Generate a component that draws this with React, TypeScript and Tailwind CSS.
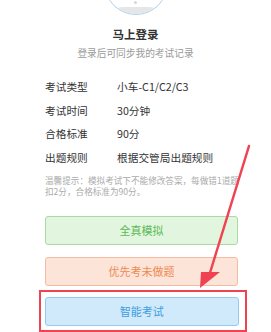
export default function App() {
  const rows = [
    ["考试类型", "小车-C1/C2/C3"],
    ["考试时间", "30分钟"],
    ["合格标准", "90分"],
    ["出题规则", "根据交管局出题规则"],
  ];

  return (
    <div
      className="relative w-[271px] h-[332px] overflow-hidden bg-white"
      style={{ fontFamily: '"Noto Sans CJK SC", "Noto Sans", sans-serif' }}
    >
      {/* avatar, mostly scrolled off the top */}
      <div className="h-[15px] flex justify-center items-end">
        <div className="shrink-0 w-[64px] h-[64px] rounded-full border-[1.5px] border-[#a8d0ee] bg-white overflow-hidden flex flex-col items-center justify-end">
          <div className="w-[3px] h-[3px] rounded-full bg-[#d8d8d8] mb-[3px]" />
          <div className="w-[42px] h-[7px] rounded-t-full bg-[#e6e6e6]" />
        </div>
      </div>

      <div className="mt-[11px] text-center text-[11.5px] leading-[16px] font-bold text-[#333]">马上登录</div>
      <div className="mt-[4px] text-center text-[9.7px] leading-[14px] text-[#9a9a9a]">登录后可同步我的考试记录</div>

      <div className="mt-[18px] pl-[45px] flex flex-col gap-[5.7px]">
        {rows.map(([k, v]) => (
          <div key={k} className="flex h-[18px] items-center text-[10.7px] text-[#333]">
            <span className="w-[72px]">{k}</span>
            <span>{v}</span>
          </div>
        ))}
      </div>

      <div className="mt-[7.5px] ml-[45px] whitespace-nowrap text-[8.6px] leading-[11px] text-[#ababab]">
        温馨提示：模拟考试下不能修改答案，每做错1道题
        <br />
        扣2分，合格标准为90分。
      </div>

      <div className="mt-[19.5px] flex flex-col items-start">
        <div className="ml-[45px] w-[193px] h-[29px] rounded-[3px] border border-[#a9dca3] bg-[#e2f6df] flex items-center justify-center text-[11px] text-[#5dba57]">
          全真模拟
        </div>
        <div className="mt-[12px] ml-[45px] w-[193px] h-[29px] rounded-[3px] border border-[#f4bc9f] bg-[#fde4d8] flex items-center justify-center text-[11px] text-[#ef8a52]">
          优先考未做题
        </div>
        <div className="mt-[4px] ml-[39px] w-[208px] border-[2.5px] border-[#ef4352] pl-[3.5px] pr-[6px] pt-[4.5px] pb-[4px]">
          <div className="h-[29px] rounded-[3px] border border-[#95cbef] bg-[#d0e9fb] flex items-center justify-center text-[11px] text-[#3d9fe2]">
            智能考试
          </div>
        </div>
      </div>

      {/* annotation arrow */}
      <svg className="absolute left-0 top-0" width="271" height="332" viewBox="0 0 271 332">
        <line x1="249" y1="146" x2="209" y2="276" stroke="#ef4352" strokeWidth="2.5" strokeLinecap="round" />
        <polygon points="200,288 201,272 220,272" fill="#ef4352" />
      </svg>
    </div>
  );
}
